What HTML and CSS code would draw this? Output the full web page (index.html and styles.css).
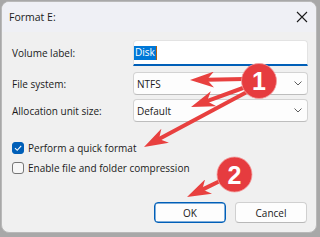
FILE: index.html
```html
<!DOCTYPE html>
<html>
<head>
<meta charset="utf-8">
<link rel="stylesheet" href="styles.css">
</head>
<body>
<div class="window">
  <div class="titlebar">
    <span class="title">Format E:</span>
    <svg class="close" width="12" height="12" viewBox="0 0 12 12"><path d="M1 1 L11 11 M11 1 L1 11" stroke="#1b1b1b" stroke-width="1.1" fill="none"/></svg>
  </div>
  <div class="content">
    <div class="row row-first">
      <span class="label">Volume label:</span>
      <div class="textbox"><span class="sel">Disk</span><span class="caret"></span></div>
    </div>
    <div class="row row-second">
      <span class="label">File system:</span>
      <div class="select"><span>NTFS</span><svg class="chev" width="8" height="5" viewBox="0 0 8 5"><path d="M0.5 0.5 L4 4 L7.5 0.5" stroke="#5f5f5f" stroke-width="1" fill="none"/></svg></div>
    </div>
    <div class="row row-third">
      <span class="label">Allocation unit size:</span>
      <div class="select"><span>Default</span><svg class="chev" width="8" height="5" viewBox="0 0 8 5"><path d="M0.5 0.5 L4 4 L7.5 0.5" stroke="#5f5f5f" stroke-width="1" fill="none"/></svg></div>
    </div>
    <div class="checks">
      <div class="check"><span class="box checked"><svg width="12" height="12" viewBox="0 0 12 12"><path d="M3 6.2 L5.2 8.3 L9.2 3.8" stroke="#fff" stroke-width="1.1" fill="none"/></svg></span><span>Perform a quick format</span></div>
      <div class="check"><span class="box"></span><span>Enable file and folder compression</span></div>
    </div>
    <div class="buttons">
      <button class="btn primary">OK</button>
      <button class="btn">Cancel</button>
    </div>
  </div>
  <svg class="annot" width="320" height="237" viewBox="0 0 320 237">
    <defs>
      <marker id="head" markerUnits="userSpaceOnUse" markerWidth="24" markerHeight="16" refX="7" refY="8" orient="auto">
        <path d="M0 0 L24 8 L0 16 L7 8 Z" fill="#e8403f"/>
      </marker>
    </defs>
    <g stroke="#e8403f" stroke-width="4" fill="none" stroke-linecap="round">
      <line x1="244" y1="79" x2="207" y2="79.7" marker-end="url(#head)"/>
      <line x1="243" y1="88" x2="207" y2="101.2" marker-end="url(#head)"/>
      <line x1="245" y1="93" x2="159" y2="139" marker-end="url(#head)"/>
      <line x1="222" y1="180" x2="202.3" y2="189.6" marker-end="url(#head)"/>
    </g>
    <circle cx="259" cy="81" r="17.5" fill="#e63c3f" stroke="#f2a0a0" stroke-width="0.8"/>
    <circle cx="234.5" cy="174.5" r="17.5" fill="#e63c3f" stroke="#f2a0a0" stroke-width="0.8"/>
    <text class="num" x="259" y="90" text-anchor="middle">1</text>
    <text class="num" x="234.5" y="183.5" text-anchor="middle">2</text>
  </svg>
</div>
</body>
</html>
```

FILE: styles.css
```css
html, body {
  margin: 0;
  padding: 0;
}
body {
  width: 320px;
  height: 237px;
  background: #a8a8a8;
  overflow: hidden;
  font-family: "Open Sans", "Liberation Sans", Arial, sans-serif;
  color: #1a1a1a;
}
.window {
  position: relative;
  margin: 1px 3px 0 1px;
  width: 316px;
  height: 232px;
  box-sizing: border-box;
  border: 1px solid #b9b9b9;
  border-radius: 8px;
  background: #f0f0f0;
  overflow: hidden;
  display: flex;
  flex-direction: column;
}
.titlebar {
  height: 30px;
  flex: none;
  background: #eff0f5;
  display: flex;
  align-items: center;
  justify-content: space-between;
  padding: 0 8px 0 7px;
}
.title {
  font-size: 10.5px;
  color: #1a1a1a;
}
.close {
  display: block;
}
.content {
  padding: 8px 8px 0 10px;
  display: flex;
  flex-direction: column;
  font-size: 10px;
}
.row {
  display: flex;
  align-items: center;
}
.row-second { margin-top: 6px; }
.row-third { margin-top: 4px; }
.label {
  width: 121px;
  flex: none;
}
.textbox {
  flex: 1;
  height: 26px;
  box-sizing: border-box;
  background: #ffffff;
  border: 1px solid #e3e3e3;
  border-bottom: 2px solid #005fb8;
  border-radius: 4px 4px 0 0;
  display: flex;
  align-items: center;
}
.sel {
  background: #0078d7;
  color: #ffffff;
  padding: 0 1px 1px 1px;
  line-height: 13px;
}
.caret {
  width: 1px;
  height: 14px;
  background: #b06010;
}
.select {
  flex: 1;
  height: 23px;
  box-sizing: border-box;
  background: #fdfdfd;
  border: 1px solid #d3d3d3;
  border-bottom-color: #bdbdbd;
  border-radius: 4px;
  display: flex;
  align-items: center;
  justify-content: space-between;
  padding: 0 5px 0 3px;
}
.chev { display: block; }
.checks {
  margin-top: 16px;
  display: flex;
  flex-direction: column;
}
.check {
  height: 20px;
  display: flex;
  align-items: center;
}
.box {
  width: 12px;
  height: 12px;
  box-sizing: border-box;
  border: 1px solid #767676;
  border-radius: 3px;
  background: #f7f7f7;
  margin-right: 4px;
  flex: none;
}
.box.checked {
  background: #005fb8;
  border-color: #005fb8;
}
.box.checked svg {
  display: block;
  margin: -1px;
}
.buttons {
  margin-top: 24px;
  display: flex;
  justify-content: flex-end;
  gap: 9px;
  padding-right: 1px;
}
.btn {
  width: 72px;
  height: 21px;
  box-sizing: border-box;
  background: #fdfdfd;
  border: 1px solid #d0d0d0;
  border-bottom-color: #b8b8b8;
  border-radius: 4px;
  font-family: "Open Sans", "Liberation Sans", Arial, sans-serif;
  font-size: 10px;
  color: #1a1a1a;
  padding: 0;
}
.btn.primary {
  border: 1px solid #005fb8;
  box-shadow: inset 0 0 0 0.5px #005fb8;
}
.annot {
  position: absolute;
  left: -2px;
  top: -2px;
  pointer-events: none;
}
.num {
  font-family: "Liberation Sans", Arial, sans-serif;
  font-weight: bold;
  font-size: 25px;
  fill: #ffffff;
}
```
